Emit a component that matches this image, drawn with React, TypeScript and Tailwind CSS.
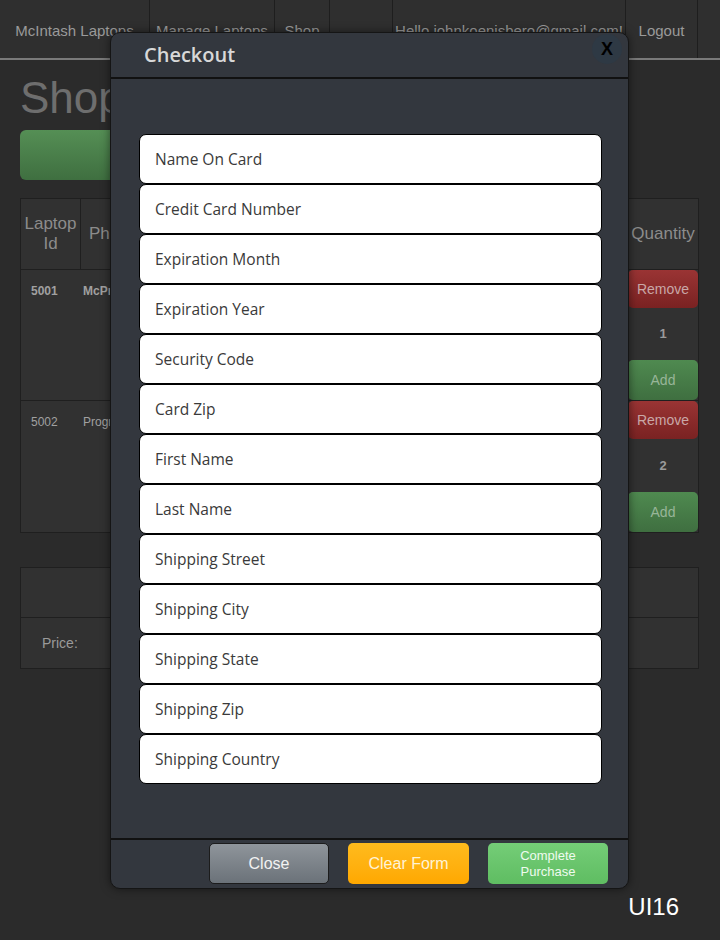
import React from "react";

const navItems = [
  { label: "McIntash Laptops", w: "w-[150px]" },
  { label: "Manage Laptops", w: "w-[125px]" },
  { label: "Shop", w: "w-[55px]" },
  { label: "", w: "w-[63px]" },
  { label: "Hello johnkoenisbero@gmail.com!", w: "w-[233px]" },
  { label: "Logout", w: "w-[72px]" },
];

const fields = [
  "Name On Card",
  "Credit Card Number",
  "Expiration Month",
  "Expiration Year",
  "Security Code",
  "Card Zip",
  "First Name",
  "Last Name",
  "Shipping Street",
  "Shipping City",
  "Shipping State",
  "Shipping Zip",
  "Shipping Country",
];

const rows = [
  { id: "5001", name: "McPro", qty: 1, cls: "font-bold" },
  { id: "5002", name: "Programmer", qty: 2, cls: "" },
];

function QtyCell({ qty }: { qty: number }) {
  return (
    <div className="flex flex-col items-stretch h-full">
      <button className="h-[38px] rounded-[5px] bg-gradient-to-b from-[#9a3434] to-[#7a2222] text-[14px] text-[#c9a7a7]">
        Remove
      </button>
      <div className="flex-1 flex items-center justify-center text-[13px] font-bold text-[#9a9a9a]">{qty}</div>
      <button className="h-[40px] rounded-[5px] bg-gradient-to-b from-[#4f8a50] to-[#3f6f40] text-[14px] text-[#98b598]">
        Add
      </button>
    </div>
  );
}

function CheckoutModal() {
  return (
    <div className="absolute left-[110px] top-[32px] w-[519px] h-[857px] rounded-[10px] border border-[#151515] bg-[#33373e] flex flex-col overflow-hidden shadow-[0_0_10px_rgba(0,0,0,0.5)]">
      {/* header */}
      <div className="h-[46px] shrink-0 flex items-center justify-between pl-[33px] pr-[6px] border-b-2 border-[#111]">
        <h2 className="text-[20px] font-semibold text-[#d8d8d8] font-['Open_Sans',sans-serif]">Checkout</h2>
        <div className="w-[30px] h-[30px] mt-[-12px] rounded-full bg-[#2e3944] flex items-center justify-center text-[18px] font-bold text-black font-['Liberation_Sans',Arial,sans-serif]">
          X
        </div>
      </div>

      {/* body */}
      <div className="flex-1 pt-[55px] pl-[28px] pr-[26px]">
        <div className="flex flex-col">
          {fields.map((f) => (
            <input
              key={f}
              placeholder={f}
              className="h-[50px] w-full rounded-[7px] border border-black bg-white pl-[15px] text-[15.5px] text-[#333] placeholder:text-[#3a3a3a] font-['Open_Sans',sans-serif] outline-none"
            />
          ))}
        </div>
      </div>

      {/* footer */}
      <div className="h-[50px] shrink-0 border-t-2 border-[#111] flex items-center justify-end gap-[19px] pr-[20px] pb-[1px] font-['Liberation_Sans',Arial,sans-serif]">
        <button className="w-[120px] h-[41px] rounded-[5px] border border-[#1c1c1c] bg-gradient-to-b from-[#8f959b] to-[#6b7279] text-[16px] text-[#f2f2f2]">
          Close
        </button>
        <button className="w-[121px] h-[41px] rounded-[5px] bg-gradient-to-b from-[#ffbb1c] to-[#ffa800] text-[16px] text-[#fff3d6]">
          Clear Form
        </button>
        <button className="w-[120px] h-[41px] rounded-[5px] bg-gradient-to-b from-[#74cd77] to-[#5fbd62] text-[13px] leading-[16px] text-[#eefbef]">
          Complete
          <br />
          Purchase
        </button>
      </div>
    </div>
  );
}

export default function App() {
  return (
    <div className="relative w-[720px] h-[940px] bg-[#2b2b2b] overflow-hidden font-['Liberation_Sans',Arial,sans-serif]">
      {/* nav */}
      <nav className="h-[60px] flex border-b-2 border-[#7a7a7a] bg-[#2f2f2f]">
        {navItems.map((n, i) => (
          <div
            key={i}
            className={`${n.w} h-full flex items-center justify-center pt-[4px] border-r border-[#1e1e1e] text-[15px] text-[#9a9a9a] whitespace-nowrap`}
          >
            {n.label}
          </div>
        ))}
        <div className="flex-1" />
      </nav>

      <div className="px-[20px] pr-[21px]">
        <h1 className="mt-[12px] text-[44px] leading-[52px] text-[#6e6e6e]">Shop</h1>
        <button className="mt-[6px] w-[180px] h-[50px] rounded-[6px] bg-gradient-to-b from-[#558f55] to-[#3f6f40]" />

        {/* cart table */}
        <div className="mt-[11px] border border-[#1f1f1f] bg-[#313131]">
          <div className="h-[71px] flex border-b border-[#1f1f1f] text-[17px] text-[#8c8c8c]">
            <div className="w-[60px] flex items-center justify-center text-center leading-[20px] border-r border-[#1f1f1f]">
              Laptop
              <br />
              Id
            </div>
            <div className="flex-1 flex items-center pl-[8px] border-r border-[#1f1f1f]">Phone</div>
            <div className="w-[70px] flex items-center justify-center">Quantity</div>
          </div>
          {rows.map((r) => (
            <div key={r.id} className="h-[131px] flex border-b border-[#1f1f1f] last:border-b-0">
              <div className={`w-[60px] pl-[10px] pt-[12px] text-[12px] text-[#a0a0a0] ${r.cls}`}>{r.id}</div>
              <div className={`flex-1 pl-[2px] pt-[12px] text-[12px] text-[#a0a0a0] ${r.cls}`}>{r.name}</div>
              <div className="w-[70px]">
                <QtyCell qty={r.qty} />
              </div>
            </div>
          ))}
        </div>

        {/* totals */}
        <div className="mt-[34px] border border-[#1f1f1f] bg-[#313131]">
          <div className="h-[50px] border-b border-[#1f1f1f]" />
          <div className="h-[50px] flex items-center pl-[21px] text-[14px] text-[#9a9a9a]">Price:</div>
        </div>

        <div className="mt-[224px] flex justify-end pr-[20px] text-[24px] leading-[28px] text-white">UI16</div>
      </div>

      <CheckoutModal />
    </div>
  );
}
